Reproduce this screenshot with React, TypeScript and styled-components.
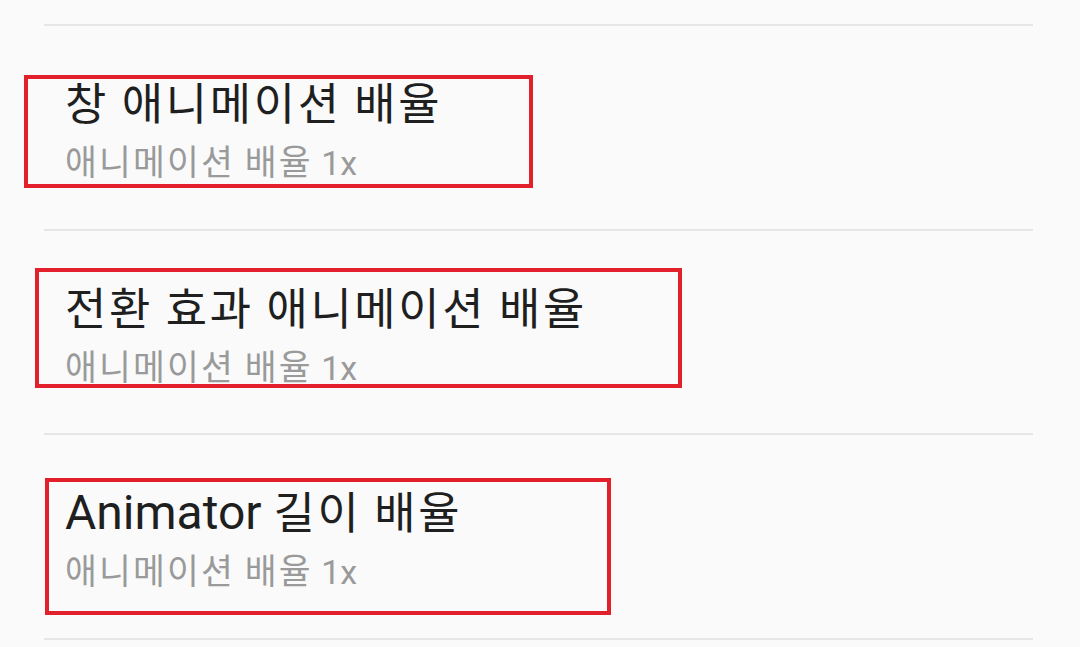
import React from "react";
import styled, { createGlobalStyle } from "styled-components";

const Global = createGlobalStyle`
  html, body { margin: 0; padding: 0; background: #fafafa; }
  body { font-family: Roboto, "Noto Sans CJK KR", sans-serif; }
`;

const Page = styled.div`
  width: 1080px;
  height: 647px;
  overflow: hidden;
  background: #fafafa;
  padding-top: 24px;
  box-sizing: border-box;
`;

const List = styled.div`
  display: flex;
  flex-direction: column;
  margin: 0 47px 0 44px;
`;

const Row = styled.div`
  position: relative;
  border-top: 2px solid #e6e6e6;
  height: 204.5px;
  padding: 46px 0 0 21px;
  box-sizing: border-box;
  display: flex;
  flex-direction: column;
`;

const EndDivider = styled.div`
  border-top: 2px solid #e6e6e6;
`;

const Title = styled.div`
  font-family: Roboto, "Noto Sans CJK KR", sans-serif;
  font-size: 48px;
  line-height: 58px;
  color: #1f1f1f;
  white-space: nowrap;
`;

const Summary = styled.div`
  font-family: Roboto, "Noto Sans CJK KR", sans-serif;
  font-size: 34px;
  line-height: 46px;
  margin-top: 4px;
  color: #9a9a9a;
  white-space: nowrap;
`;

const Hangul = styled.span<{ $scale: number }>`
  font-family: "Noto Sans CJK KR", sans-serif;
  font-size: ${(p) => p.$scale}em;
  letter-spacing: 0.06em;
`;

const Mark = styled.div<{ $l: number; $t: number; $w: number; $h: number }>`
  position: absolute;
  left: ${(p) => p.$l}px;
  top: ${(p) => p.$t}px;
  width: ${(p) => p.$w}px;
  height: ${(p) => p.$h}px;
  border: 4px solid #e2202c;
  box-sizing: border-box;
  pointer-events: none;
`;

function Mixed({ text, scale }: { text: string; scale: number }) {
  const parts = text.split(/([\uac00-\ud7a3]+(?:\s+[\uac00-\ud7a3]+)*)/);
  return (
    <>
      {parts.map((p, i) =>
        /[\uac00-\ud7a3]/.test(p) ? (
          <Hangul key={i} $scale={scale}>
            {p}
          </Hangul>
        ) : (
          <React.Fragment key={i}>{p}</React.Fragment>
        )
      )}
    </>
  );
}

const items = [
  { title: "창 애니메이션 배율", mark: { l: -20, t: 49, w: 509, h: 113 } },
  { title: "전환 효과 애니메이션 배율", mark: { l: -9, t: 37, w: 647, h: 120 } },
  { title: "Animator 길이 배율", mark: { l: 1, t: 43, w: 566, h: 137 } },
];

export default function App() {
  return (
    <>
      <Global />
      <Page>
        <List>
          {items.map((it) => (
            <Row key={it.title}>
              <Title>
                <Mixed text={it.title} scale={0.935} />
              </Title>
              <Summary>
                <Mixed text="애니메이션 배율 1x" scale={1.02} />
              </Summary>
              <Mark $l={it.mark.l} $t={it.mark.t} $w={it.mark.w} $h={it.mark.h} />
            </Row>
          ))}
          <EndDivider />
        </List>
      </Page>
    </>
  );
}
